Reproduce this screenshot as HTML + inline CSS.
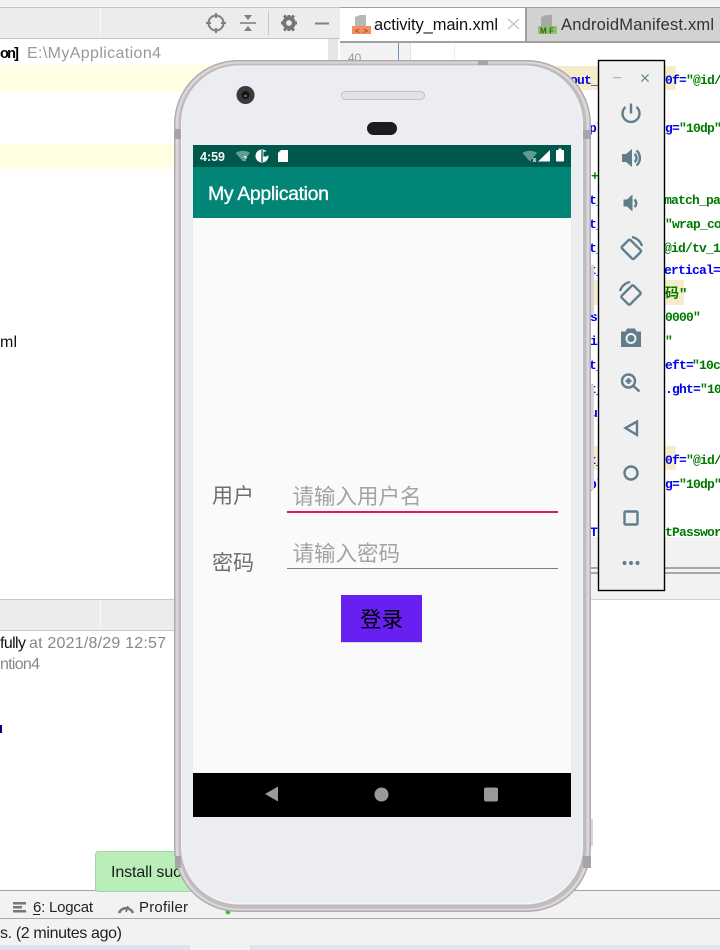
<!DOCTYPE html>
<html lang="zh">
<head>
<meta charset="utf-8">
<title>My Application</title>
<style>
html,body{margin:0;padding:0;width:720px;height:950px;overflow:hidden;background:#fff}
svg{display:block}
text{font-family:"Liberation Sans","Noto Sans CJK SC",sans-serif}
.m text{font-family:"Liberation Mono","Noto Sans CJK SC",monospace;font-size:13px;letter-spacing:-.8px;font-weight:bold}
.m .cj{font-size:14px;letter-spacing:0}
.b{fill:#0000f0}
.g{fill:#007a00}
.ic{fill:none;stroke:#5f7d8c;stroke-width:2.4}
.if{fill:#5f7d8c}
</style>
</head>
<body>
<svg width="720" height="950" viewBox="0 0 720 950" xmlns="http://www.w3.org/2000/svg">
  <!-- IDE base -->
  <rect width="720" height="950" fill="#fff"/>
  <rect width="720" height="7" fill="#f2f2f2"/>
  <rect y="7" width="340" height="32" fill="#ececec"/>
  <rect y="7" width="340" height="1" fill="#c4c4c4"/>
  <rect y="38" width="340" height="1" fill="#c4c4c4"/>
  <rect x="100" y="8" width="1" height="30" fill="#f8f8f8"/>

  <!-- toolbar icons -->
  <g fill="none" stroke="#808080" stroke-width="2">
    <circle cx="216" cy="23" r="7.500"/>
    <path d="M216 13v5M216 28v5M206 23h5M221 23h5"/>
    <path d="M240 23h16" stroke-width="1.600"/>
    <path d="M315 23.500h14" stroke-width="2"/>
  </g>
  <path d="M244 15h8l-4 5zM244 31h8l-4-5z" fill="#808080"/>
  <rect x="268" y="11" width="1" height="24" fill="#c8c8c8"/>
  <circle cx="289" cy="23" r="4.800" fill="none" stroke="#757575" stroke-width="3.800"/>
  <path d="M287.500 15h3v3h-3zM287.500 28h3v3h-3zM281 21.500h3v3h-3zM294 21.500h3v3h-3zM283 16.500l2-2 2 2-2 2zM291 16.500l2-2 2 2-2 2zM283 29.500l2-2 2 2-2 2zM291 29.500l2-2 2 2-2 2z" fill="#757575"/>

  <!-- left pane -->
  <rect x="328" y="39" width="10" height="561" fill="#e6e6e6"/>
  <rect y="65" width="328" height="26" fill="#ffffe4"/>
  <rect y="144" width="328" height="25" fill="#ffffe4"/>
  <text x="0" y="58" font-size="14.500" font-weight="bold" fill="#000" textLength="19" lengthAdjust="spacing">on]</text>
  <text x="27" y="58" font-size="16" fill="#999" textLength="134" lengthAdjust="spacing">E:\MyApplication4</text>
  <text x="0" y="347" font-size="16" fill="#111" textLength="17" lengthAdjust="spacing">ml</text>

  <!-- lower pane -->
  <rect y="600" width="180" height="30" fill="#ececec"/>
  <rect y="599" width="180" height="1" fill="#c8c8c8"/>
  <rect y="630" width="180" height="1" fill="#c8c8c8"/>
  <rect x="100" y="600" width="1" height="30" fill="#f8f8f8"/>
  <text x="0" y="648" font-size="16" fill="#111" textLength="26" lengthAdjust="spacing">fully</text>
  <text x="29" y="648" font-size="16" fill="#888" textLength="137" lengthAdjust="spacing">at 2021/8/29 12:57</text>
  <text x="0" y="669" font-size="16" fill="#888" textLength="40" lengthAdjust="spacing">ntion4</text>
  <rect x="0" y="725" width="2" height="8" fill="#000080"/>

  <!-- bottom bars -->
  <rect y="890" width="720" height="60" fill="#f2f2f2"/>
  <rect y="890" width="720" height="1" fill="#a0a0a0"/>
  <rect y="918" width="720" height="1" fill="#a8a8a8"/>
  <rect y="945" width="190" height="5" fill="#dfe2ee"/>
  <rect x="190" y="945" width="60" height="5" fill="#f2f2f2"/>
  <rect x="250" y="945" width="470" height="5" fill="#dfe3ee"/>
  <path d="M13 902h13v2.500H13zM13 906h9v2.500h-9zM13 910h13v2.500H13z" fill="#777"/>
  <text x="33" y="912" font-size="15" fill="#222" textLength="60" lengthAdjust="spacing">6: Logcat</text>
  <rect x="33" y="914" width="7" height="1" fill="#222"/>
  <path d="M119 913a7.500 7.500 0 0 1 14 0" fill="none" stroke="#777" stroke-width="2.600"/>
  <path d="M126 912l2-6" stroke="#777" stroke-width="1.800"/>
  <text x="139" y="912" font-size="15" fill="#222" textLength="49" lengthAdjust="spacing">Profiler</text>
  <circle cx="228" cy="912" r="2.500" fill="#35c635"/>
  <text x="0" y="938" font-size="16" fill="#222" textLength="122" lengthAdjust="spacing">s. (2 minutes ago)</text>

  <!-- toast -->
  <rect x="95.500" y="851.500" width="130" height="40" rx="3" fill="#b9eeb9" stroke="#a5d4a5"/>
  <text x="111" y="877" font-size="16" fill="#1a1a1a" textLength="78" lengthAdjust="spacing">Install succ</text>

  <!-- editor tabs -->
  <rect x="340" y="7" width="380" height="1" fill="#a0a0a0"/>
  <rect x="340" y="8" width="185" height="33" fill="#fff"/>
  <rect x="525" y="8" width="2" height="33" fill="#a0a0a0"/>
  <rect x="527" y="8" width="193" height="33" fill="#d2d2d2"/>
  <rect x="340" y="41" width="380" height="2" fill="#a0a0a0"/>
  <path d="M355 23v-6l5-2h6v11h-11z" fill="#b8b8b8"/>
  <rect x="352" y="26" width="19" height="8" fill="#f28f60"/>
  <text x="355" y="33.500" font-size="8" fill="#6a3010" textLength="13" lengthAdjust="spacing">&lt;&gt;</text>
  <text x="374" y="30" font-size="16.500" fill="#111" textLength="124" lengthAdjust="spacing">activity_main.xml</text>
  <path d="M508 19l11 10M519 19l-11 10" stroke="#c8c8c8" stroke-width="1.500"/>
  <path d="M541 23v-6l5-2h6v11h-11z" fill="#a8a8a8"/>
  <rect x="538" y="26" width="19" height="8" fill="#8fc36b"/>
  <text x="540" y="33.500" font-size="8" font-weight="bold" fill="#2f5f20" textLength="14" lengthAdjust="spacing">MF</text>
  <text x="561" y="30" font-size="16.500" fill="#333" textLength="153" lengthAdjust="spacing">AndroidManifest.xml</text>

  <!-- editor gutter and code -->
  <rect x="340" y="43" width="70" height="494" fill="#f2f2f2"/>
  <rect x="398" y="43" width="1" height="30" fill="#6f95c0"/>
  <rect x="410" y="43" width="1" height="494" fill="#e4e4e4"/>
  <rect x="454" y="43" width="1" height="494" fill="#eee"/>
  <text x="348" y="62" font-size="12" fill="#999">40</text>
  <rect x="555" y="66" width="121" height="24" fill="#f5edc8"/>
  <rect x="590" y="280" width="94" height="25" fill="#f5edc8"/>
  <rect x="590" y="446" width="86" height="24" fill="#f5edc8"/>

  <g class="m">
    <text class="b" x="570" y="84">out_</text>
    <text class="b" x="665" y="84">0f=</text><text class="g" x="686" y="84">"@id/</text>
    <text class="b" x="589" y="132">pl</text>
    <text class="b" x="665" y="132">g=</text><text class="g" x="679" y="132">"10dp"</text>
    <text class="g" x="591" y="180">+</text>
    <text class="b" x="589" y="204">t_</text><text class="g" x="664" y="204">match_pa</text>
    <text class="b" x="589" y="228">t_</text><text class="g" x="665" y="228">"wrap_co</text>
    <text class="b" x="589" y="252">t_</text><text class="g" x="664" y="252">@id/tv_1</text>
    <text class="b" x="589" y="274">t_</text><text class="b" x="664" y="274">ertical=</text>
    <text class="g cj" x="665" y="298">码"</text>
    <text class="b" x="590" y="321">s</text><text class="g" x="665" y="321">0000"</text>
    <text class="b" x="590" y="345">is</text><text class="g" x="665" y="345">"</text>
    <text class="b" x="589" y="369">t_</text><text class="b" x="665" y="369">eft=</text><text class="g" x="692" y="369">"10c</text>
    <text class="b" x="589" y="393">t_</text><text class="b" x="665" y="393">.ght=</text><text class="g" x="700" y="393">"10</text>
    <text class="b" x="590" y="417">u</text>
    <text class="b" x="589" y="464">t_</text>
    <text class="b" x="665" y="464">0f=</text><text class="g" x="686" y="464">"@id/</text>
    <text class="b" x="589" y="488">pl</text>
    <text class="b" x="665" y="488">g=</text><text class="g" x="679" y="488">"10dp"</text>
    <text class="b" x="590" y="536">T</text><text class="g" x="665" y="536">tPasswor</text>
  </g>
  <rect x="590" y="537" width="130" height="63" fill="#f2f2f2"/>
  <rect x="590" y="567" width="130" height="2" fill="#a8a8a8"/>
  <rect x="590" y="572" width="130" height="2" fill="#a8a8a8"/>
  <rect x="590" y="599" width="130" height="1" fill="#d0d0d0"/>

  <!-- phone body -->
  <rect x="591" y="265" width="3" height="50" fill="#d8d6d7"/>
  <rect x="591" y="385" width="3" height="105" fill="#d8d6d7"/>
  <rect x="591" y="819" width="2" height="27" fill="#d8d6d7"/>
  <rect x="174" y="60" width="417" height="852" rx="64" fill="#b0aaae"/>
  <rect x="175.500" y="61.500" width="414" height="849" rx="62.500" fill="#dcd8da"/>
  <rect x="178.500" y="63.500" width="408" height="845" rx="60" fill="#c0bbbe"/>
  <rect x="181" y="65.500" width="402" height="839" rx="58" fill="#f4f4f6"/>
  <rect x="182" y="66.500" width="400" height="836" rx="56" fill="#ecedf0"/>
  <rect x="174" y="129" width="7" height="10" fill="#a8a3a6"/>
  <rect x="583" y="130" width="8" height="9" fill="#a8a3a6"/>
  <rect x="478" y="60" width="10" height="5" fill="#a8a3a6"/>
  <rect x="583" y="856" width="8" height="12" fill="#a8a3a6"/>
  <rect x="175" y="856" width="6" height="12" fill="#a8a3a6"/>

  <circle cx="245.500" cy="95" r="9" fill="#3a3a3e"/>
  <circle cx="245.500" cy="95" r="4" fill="#15150f"/>
  <circle cx="245.500" cy="96" r="1.200" fill="#8c7d45"/>
  <rect x="341.500" y="91.500" width="83" height="8" rx="4" fill="#e2e3e6" stroke="#c0c1c4" stroke-width="1"/>
  <rect x="367" y="122" width="30" height="13" rx="6.500" fill="#1c1c1f"/>

  <!-- screen -->
  <rect x="193" y="145" width="378" height="22" fill="#00574b"/>
  <rect x="193" y="167" width="378" height="51" fill="#008577"/>
  <rect x="193" y="218" width="378" height="555" fill="#fafafa"/>
  <rect x="193" y="773" width="378" height="44" fill="#000"/>

  <!-- status bar -->
  <text x="200" y="161" font-size="12.500" font-weight="bold" fill="#f2f8f7" textLength="25" lengthAdjust="spacing">4:59</text>
  <path d="M235.500 153c4-3 11-3 14.500 0l-7 8.500z" fill="#5f9c92"/>
  <text x="243" y="161" font-size="7" font-weight="bold" fill="#fff">?</text>
  <circle cx="262" cy="156" r="6.500" fill="#fff"/>
  <path d="M262 150v12" stroke="#00574b" stroke-width="1.300"/>
  <path d="M263.500 151.500h2.500a2 2 0 0 1 0 5h-2.500z" fill="#00574b"/>
  <path d="M281 150h7v12h-10v-9z" fill="#fff"/>
  <path d="M522.500 153c4-3 11-3 14.500 0l-7 8.500z" fill="#5f9c92"/>
  <text x="532.500" y="162" font-size="7" font-weight="bold" fill="#fff">x</text>
  <path d="M538 161.500l12-11.500v11.500z" fill="#fff"/>
  <rect x="556" y="150" width="8" height="11.500" rx="1" fill="#fff"/>
  <rect x="558.500" y="148.500" width="3" height="2" fill="#fff"/>

  <text x="208" y="200" font-size="19.500" fill="#fff" stroke="#fff" stroke-width=".35" textLength="121" lengthAdjust="spacing">My Application</text>

  <!-- form -->
  <text x="212" y="503" font-size="21" fill="#6e6e6e">用户</text>
  <text x="292.500" y="504" font-size="21.500" fill="#a3a3a3">请输入用户名</text>
  <rect x="287" y="511" width="271" height="2" fill="#e0165f"/>
  <text x="212" y="570" font-size="21" fill="#6e6e6e">密码</text>
  <text x="292.500" y="561" font-size="21.500" fill="#a3a3a3">请输入密码</text>
  <rect x="287" y="568" width="271" height="1" fill="#808080"/>
  <rect x="341" y="596" width="81" height="47" fill="#d8d8dc"/>
  <rect x="341" y="595" width="81" height="47" fill="#6820f2"/>
  <text x="360" y="627" font-size="21.500" fill="#000">登录</text>

  <!-- nav bar -->
  <path d="M265 794l13-7.500v15z" fill="#999"/>
  <circle cx="381.500" cy="794.500" r="7" fill="#999"/>
  <rect x="484" y="787.500" width="14" height="14" rx="2" fill="#999"/>

  <!-- emulator side panel -->
  <rect x="598.500" y="60.500" width="66" height="530" fill="#f0f0f0" stroke="#000" stroke-width="1.400"/>
  <rect x="613" y="77" width="8" height="1.300" fill="#a9b8c0"/>
  <path d="M641.500 74.500l7 7M648.500 74.500l-7 7" stroke="#6f8a98" stroke-width="1.300" fill="none"/>

  <path class="ic" d="M625.500 107a8.500 8.500 0 1 0 11 0M631 103.500v10" stroke-width="2.600"/>

  <path class="if" d="M622 154h4l6-5v18l-6-5h-4z"/>
  <path class="ic" d="M634.500 154a5 5 0 0 1 0 8M636.500 150.500a10 10 0 0 1 0 15" stroke-width="1.800"/>

  <path class="if" d="M623.500 199.500h3.500l5.500-5v17l-5.500-5h-3.500z"/>
  <path class="ic" d="M634.500 199.500a5 5 0 0 1 0 7.500" stroke-width="2"/>

  <g transform="rotate(-45 631 249)">
    <rect class="ic" x="625" y="241" width="12" height="17" rx="1.500" stroke-width="2.600"/>
  </g>
  <path class="ic" d="M632 237a13 13 0 0 1 10 9" stroke-width="1.500"/>

  <g transform="rotate(45 631 295)">
    <rect class="ic" x="625" y="286.500" width="12" height="17" rx="1.500" stroke-width="2.600"/>
  </g>
  <path class="ic" d="M630 282a13 13 0 0 0-10 9" stroke-width="1.500"/>

  <path class="if" d="M621 331.500h4.500l1.500-3h8l1.500 3h4.500v15.500h-20z"/>
  <circle cx="631" cy="338.500" r="4.500" fill="#5f7d8c" stroke="#f0f0f0" stroke-width="2"/>

  <circle class="ic" cx="628.500" cy="381" r="6.500" stroke-width="1.900"/>
  <path class="ic" d="M633.500 386l6 5.500" stroke-width="2.400"/>
  <path class="ic" d="M625.500 381h6M628.500 378v6" stroke-width="1.200"/>

  <path class="ic" d="M637 421.500v13.500l-11.500-7z" stroke-width="1.900"/>
  <circle class="ic" cx="631" cy="473" r="6.500" stroke-width="1.900"/>
  <rect class="ic" x="624.500" y="511.500" width="13" height="13" rx="1" stroke-width="1.900"/>
  <circle class="if" cx="624.500" cy="563" r="2"/>
  <circle class="if" cx="631" cy="563" r="2"/>
  <circle class="if" cx="637.500" cy="563" r="2"/>
</svg>
</body>
</html>
